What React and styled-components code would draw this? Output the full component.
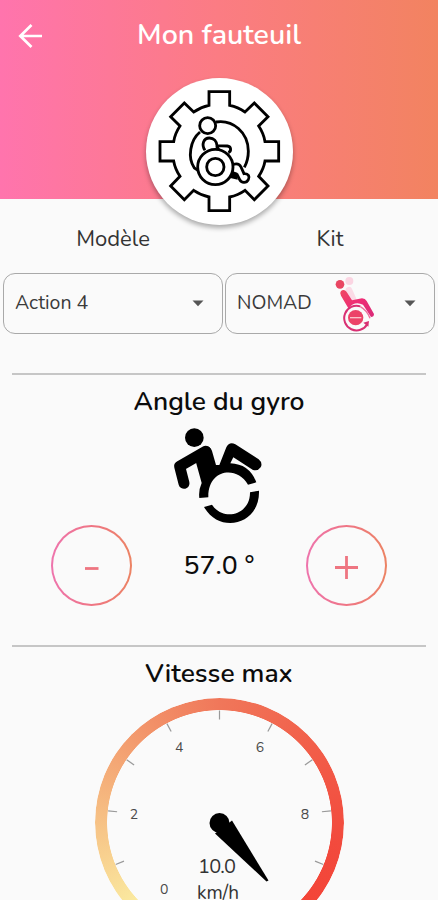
import React from "react";
import styled, { createGlobalStyle } from "styled-components";

const GlobalStyle = createGlobalStyle`
  * { box-sizing: border-box; }
  html, body { margin: 0; height: 900px; overflow: hidden; background: #fafafa; }
  body { font-family: Nunito, "Open Sans", sans-serif; color: #0c0c0c; }
`;

const Screen = styled.main`
  width: 438px;
  height: 900px;
  overflow: hidden;
  background: #fafafa;
`;

const Header = styled.header`
  position: relative;
  height: 199px;
  padding-top: 14px;
  display: grid;
  grid-template-columns: 60px 1fr 60px;
  align-items: start;
  background: linear-gradient(90deg, #ff74ad 0%, #fb7c83 50%, #f28360 100%);
`;

const BackButton = styled.button`
  height: 44px;
  padding: 0;
  border: 0;
  background: none;
  display: grid;
  place-items: center;
  svg { display: block; }
`;

const Title = styled.h1`
  margin: 0;
  line-height: 42px;
  font-size: 28.6px;
  font-weight: 600;
  text-align: center;
  white-space: nowrap;
  color: #fff;
`;

const Avatar = styled.div`
  position: absolute;
  left: 146px;
  top: 78px;
  width: 147px;
  height: 147px;
  border-radius: 50%;
  background: #fff;
  box-shadow: 0 3px 5px rgba(0, 0, 0, 0.32);
  svg { display: block; }
`;

const Selectors = styled.section`
  display: grid;
  grid-template-columns: 220px 210px;
  column-gap: 2px;
  padding: 21px 3px 0 3px;
`;

const Field = styled.div`
  display: flex;
  flex-direction: column;
  align-items: center;
`;

const FieldLabel = styled.span`
  height: 38px;
  line-height: 38px;
  font-size: 22px;
  font-weight: 400;
  color: #333;
`;

const Select = styled.button`
  margin-top: 15px;
  width: 100%;
  height: 61px;
  padding: 0 18px 0 11px;
  border: 1px solid #a9a9a9;
  border-radius: 12px;
  background: transparent;
  display: flex;
  align-items: center;
  font: inherit;
  font-size: 19.5px;
  color: #3a3a3a;
  svg { flex: none; display: block; }
`;

const Value = styled.span`
  flex: 1;
  text-align: left;
  line-height: 26px;
  padding-bottom: 2px;
`;

const KitPicture = styled.span`
  margin: 2px 28px 0 0;
`;

const Divider = styled.hr`
  margin: ${(p) => p.$top}px 12px 0;
  height: 2px;
  border: 0;
  background: #c6c6c6;
`;

const Heading = styled.h2`
  margin: 0;
  padding-top: 7px;
  height: 46px;
  line-height: 38px;
  font-size: 26.4px;
  font-weight: 600;
  text-align: center;
  color: #0c0c0c;
`;

const GyroPicture = styled.div`
  height: 104px;
  padding: 4px 0 0 1px;
  display: flex;
  justify-content: center;
`;

const Stepper = styled.div`
  display: flex;
  justify-content: space-between;
  align-items: center;
  padding: 0 51px;
  height: 82px;
  margin-top: -1px;
`;

const RoundButton = styled.button`
  width: 81px;
  height: 81px;
  padding: 0;
  border: 2px solid transparent;
  border-radius: 50%;
  background:
    linear-gradient(#fafafa, #fafafa) padding-box,
    linear-gradient(90deg, #ee74ad, #ef7585 50%, #ec8363) border-box;
  svg { display: block; }
`;

const Reading = styled.output`
  padding-bottom: 1px;
  font-size: 26.6px;
  font-weight: 500;
  line-height: 36px;
`;

const Gauge = styled.div`
  width: 249px;
  height: 249px;
  margin: 5px auto 0;
  display: grid;
  > * { grid-area: 1 / 1; }
`;

const Ring = styled.div`
  border-radius: 50%;
  background: conic-gradient(from 220deg, #fbf0a4 0deg, #f6bd82 55deg, #f29168 105deg, #f0775a 140deg, #f25c48 195deg, #f24a3d 240deg, #f44336 280deg, transparent 280deg);
  mask: radial-gradient(circle, transparent 112px, #000 112.7px);
`;

const GaugeFace = styled.svg`
  display: block;
  overflow: visible;
  font-family: Nunito, "Open Sans", sans-serif;
`;

function BackIcon() {
  return (
    <svg width="28" height="28" viewBox="0 0 28 28" fill="none" stroke="#fff" strokeWidth="2.7">
      <path d="M26 14H4M15.500 3L4.300 14L15.500 25" />
    </svg>
  );
}

function GearIcon() {
  return (
    <svg width="147" height="147" viewBox="18 24 441 441" fill="none" stroke="#000" strokeWidth="8.500">
      <path d="M207 106V65H269V106Q294 111 315 126L343 99L384 140L356 168Q371 190 375 215H416V273H375Q371 297 356 319L384 348L343 389L315 361Q294 376 269 381V422H207V381Q183 376 161 361L133 389L92 348L120 319Q105 297 101 273H60V215H101Q105 190 120 168L92 140L133 99L161 126Q183 111 207 106Z" />
      <path d="M228 156C278 148 325 187 325 244Q325 271 313 292M180 186C150 211 142 263 163 294L174 301" />
      <circle cx="203" cy="167" r="24" />
      <path d="M195 241C183 223 191 204 208 204C222 204 230 214 231 227L262 228C274 229 275 244 265 248M229 228L236 238" />
      <circle cx="226" cy="291" r="53" />
      <circle cx="226" cy="291" r="26" />
      <path d="M280 283Q297 278 303 291L312 311C326 310 330 321 325 329C319 341 304 339 299 329L290 311" />
      <path d="M277 303L292 308L293 329L268 323Z" fill="#000" stroke="none" />
    </svg>
  );
}

function NomadIcon() {
  return (
    <svg width="46" height="55" viewBox="0 0 138 165">
      <defs>
        <linearGradient id="nomadFill" x1="0" y1="0" x2="1" y2="1">
          <stop offset="0" stopColor="#ef4860" />
          <stop offset="0.500" stopColor="#ee2c76" />
          <stop offset="1" stopColor="#d92b78" />
        </linearGradient>
      </defs>
      <circle cx="58" cy="12" r="12" fill="#fbd5e2" />
      <path d="M57 40L69 67" stroke="#fbdbe6" strokeWidth="20" strokeLinecap="round" />
      <circle cx="30" cy="22" r="13" fill="#e94662" />
      <path d="M33 42C40 36 47 39 52 48L66 70L96 64Q106 64 110 72L132 111Q132 120 123 120L99 83Q74 70 55 94L33 56Q28 48 33 42Z" fill="url(#nomadFill)" />
      <path d="M91 89Q112 101 120 124" fill="none" stroke="#ef6f9d" strokeWidth="4" />
      <path d="M91 88A37 37 0 1 0 112 141" fill="none" stroke="#d93073" strokeWidth="6" />
      <path d="M100 137L117 132L115 149Z" fill="#d93073" />
      <circle cx="77" cy="122" r="23" fill="#ec4268" />
      <path d="M60 122H94" stroke="#fac2ca" strokeWidth="4" />
    </svg>
  );
}

function Caret() {
  return (
    <svg width="12" height="7" viewBox="0 0 12 7" aria-hidden="true">
      <path d="M0.500 0.500H11.500L6 6.200Z" fill="#555" />
    </svg>
  );
}

function WheelchairIcon() {
  return (
    <svg width="100" height="100" viewBox="150 195 300 300" fill="none" stroke="#000">
      <circle cx="223" cy="233" r="28" fill="#000" stroke="none" />
      <path d="M192 370L179 319L257 274" strokeWidth="33" strokeLinecap="round" strokeLinejoin="round" />
      <path d="M226 300L247 262Q269 252 276 273L288 315H298L319 262Q328 244 346 253L416 298Q429 309 422 322Q414 334 399 330L340 292L331 310Q388 312 409 367L384 374C350 315 263 328 265 412L238 414Q235 391 245 369Z" fill="#000" stroke="none" />
      <path d="M252 441L276 434C310 486 391 465 390 397L417 392C421 493 300 525 252 441Z" fill="#000" stroke="none" />
    </svg>
  );
}

function StepIcon({ plus }) {
  return (
    <svg width="77" height="77" viewBox="0 0 77 77" stroke="#ee7581" strokeWidth="2.800">
      {plus ? <path d="M27 40.500H50M38.500 29V52" /> : <path d="M32 41.500H45.500" />}
    </svg>
  );
}

const CENTER = 124.5;
const polar = (value, r) => {
  const a = ((130 + value * 28) * Math.PI) / 180;
  return [CENTER + r * Math.cos(a), CENTER + r * Math.sin(a)];
};

function SpeedGauge() {
  return (
    <Gauge>
      <Ring />
      <GaugeFace width="249" height="249" viewBox="0 0 249 249">
        {[1, 2, 3, 4, 5, 6, 7, 8, 9].map((v) => {
          const [x1, y1] = polar(v, 103);
          const [x2, y2] = polar(v, 112);
          return <line key={v} x1={x1} y1={y1} x2={x2} y2={y2} stroke="#999" strokeWidth="1.200" />;
        })}
        {[0, 2, 4, 6, 8].map((v) => {
          const [x, y] = polar(v, 86);
          return (
            <text key={v} x={x} y={y + 5.5} fontSize="14" fill="#4a4a4a" textAnchor="middle">{v}</text>
          );
        })}
        <text x="122" y="175" fontSize="20" fill="#333" textAnchor="middle" textLength="38">10.0</text>
        <text x="123" y="201" fontSize="19" fill="#333" textAnchor="middle" textLength="42">km/h</text>
        <circle cx="124.500" cy="125" r="10" />
        <path d="M120 135.500L137 122.500L173.500 182.500L171.500 183.500Z" />
      </GaugeFace>
    </Gauge>
  );
}

export default function App() {
  return (
    <Screen>
      <GlobalStyle />
      <Header>
        <BackButton aria-label="Retour"><BackIcon /></BackButton>
        <Title>Mon fauteuil</Title>
        <Avatar><GearIcon /></Avatar>
      </Header>
      <Selectors>
        <Field>
          <FieldLabel>Modèle</FieldLabel>
          <Select><Value>Action 4</Value><Caret /></Select>
        </Field>
        <Field>
          <FieldLabel>Kit</FieldLabel>
          <Select><Value>NOMAD</Value><KitPicture><NomadIcon /></KitPicture><Caret /></Select>
        </Field>
      </Selectors>
      <Divider $top={39} />
      <Heading>Angle du gyro</Heading>
      <GyroPicture><WheelchairIcon /></GyroPicture>
      <Stepper>
        <RoundButton aria-label="Diminuer"><StepIcon /></RoundButton>
        <Reading>57.0 °</Reading>
        <RoundButton aria-label="Augmenter"><StepIcon plus /></RoundButton>
      </Stepper>
      <Divider $top={39} />
      <Heading>Vitesse max</Heading>
      <SpeedGauge />
    </Screen>
  );
}
